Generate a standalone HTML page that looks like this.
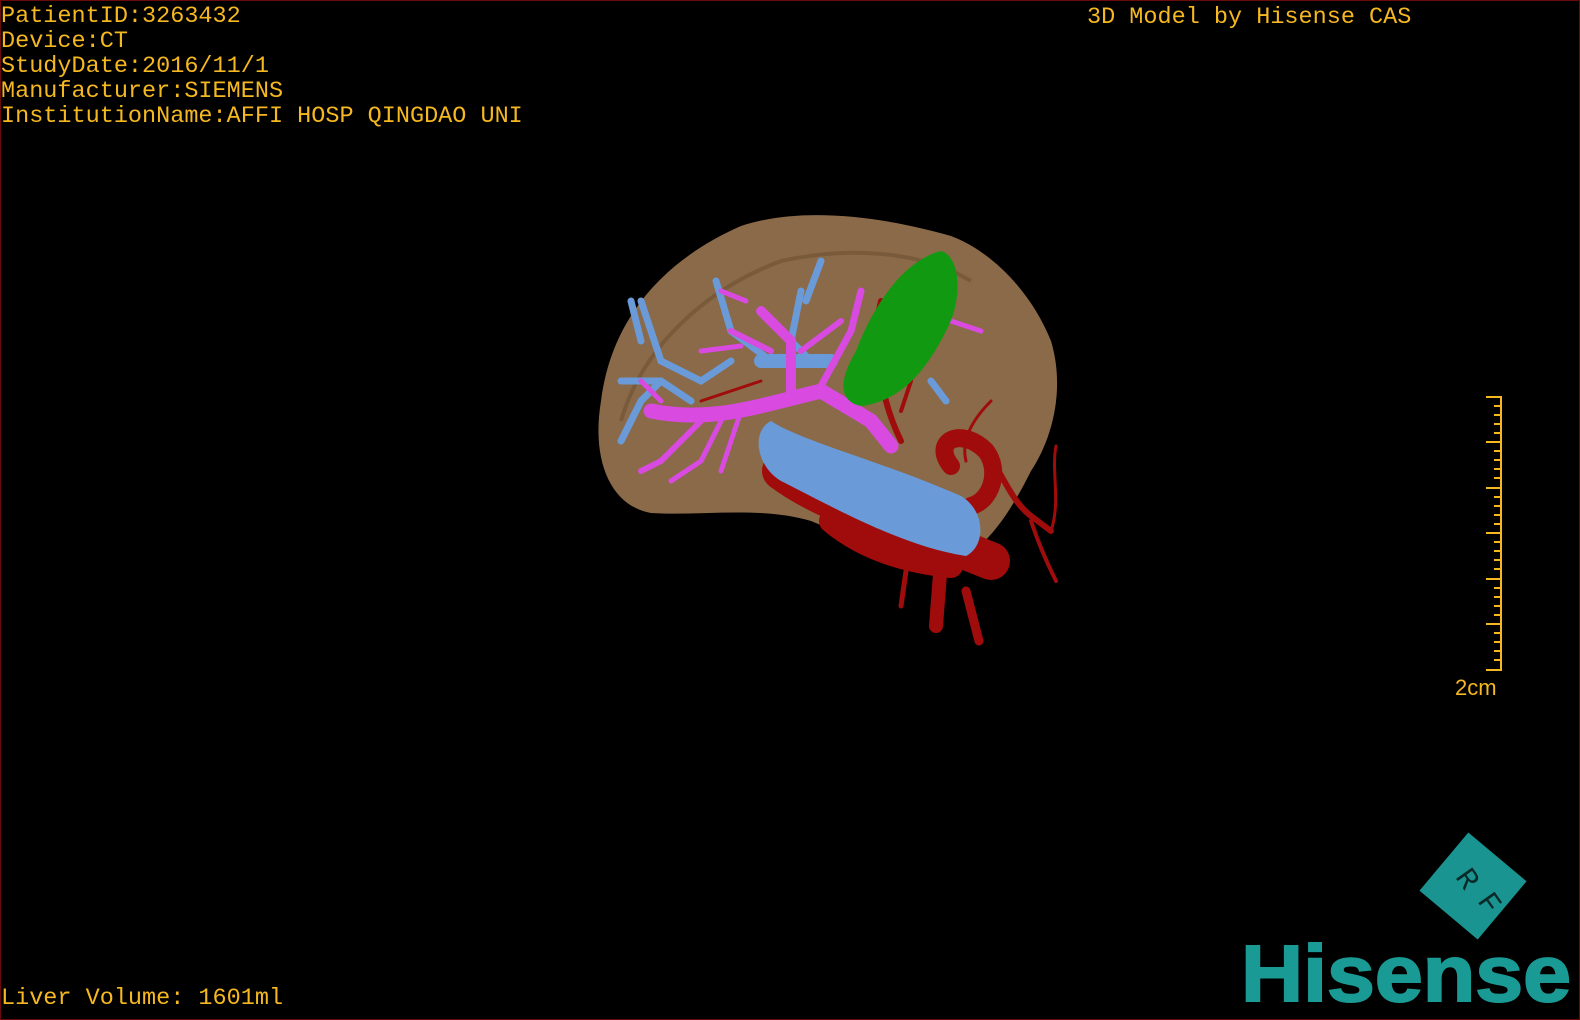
<!DOCTYPE html>
<html><head><meta charset="utf-8"><style>
html,body{margin:0;padding:0;background:#000;}
#c{position:relative;width:1580px;height:1020px;background:#000;overflow:hidden;box-sizing:border-box;border:1px solid #6a0a0a;}
.t{position:absolute;color:#f5b820;font-family:"Liberation Mono",monospace;font-size:23.5px;line-height:25px;white-space:pre;}
</style></head><body><div id="c">
<div class="t" style="left:0;top:3px">PatientID:3263432
Device:CT
StudyDate:2016/11/1
Manufacturer:SIEMENS
InstitutionName:AFFI HOSP QINGDAO UNI</div>
<div class="t" style="left:1086px;top:4px">3D Model by Hisense CAS</div>
<div class="t" style="left:0;top:985px">Liver Volume: 1601ml</div>
<svg width="1580" height="1020" style="position:absolute;left:0;top:0">
<path d="M600,400 C610,320 660,260 740,225 C800,205 880,215 950,235 C990,250 1030,290 1050,340 C1065,390 1050,440 1030,470 C1010,510 990,540 960,560 C900,565 860,540 810,520 C760,505 700,515 650,512 C610,505 590,460 600,400 Z" fill="#8a6a48"/>
<path d="M620,420 C640,350 700,290 780,260 C850,245 920,250 970,280" stroke="#6e5236" stroke-width="4" fill="none" opacity=".6"/>
<g fill="none" stroke="#a00c0c" stroke-linecap="round">
<path d="M780,470 C820,500 880,520 940,540 L990,560" stroke-width="38"/>
<path d="M830,520 C860,545 900,560 950,565" stroke-width="24"/>
<path d="M940,560 L935,625" stroke-width="14"/>
<path d="M965,590 L978,640" stroke-width="9"/>
<path d="M905,570 L900,605" stroke-width="5"/>
<path d="M950,465 C930,440 960,425 985,450 C1000,470 990,500 970,505" stroke-width="18"/>
<path d="M985,450 C1000,470 1010,500 1030,515 L1050,530" stroke-width="6"/>
<path d="M1030,520 C1040,550 1050,570 1055,580" stroke-width="4"/>
<path d="M1050,530 C1060,500 1050,470 1055,445" stroke-width="3"/>
<path d="M880,300 C870,340 880,400 900,440" stroke-width="6"/>
<path d="M900,410 L910,380" stroke-width="4"/>
<path d="M990,400 C970,420 960,440 965,460" stroke-width="3"/>
<path d="M700,400 L760,380" stroke-width="3"/>
</g>
<path d="M770,420 C800,440 880,460 960,495 C985,510 985,545 965,555 C900,545 830,505 780,480 C755,465 750,430 770,420 Z" fill="#6a9ad8"/>
<g fill="none" stroke="#6a9ad8" stroke-linecap="round" stroke-width="7">
<path d="M640,300 L660,360 L700,380 L730,360"/><path d="M620,380 L660,380 L690,400"/><path d="M640,340 L630,300"/>
<path d="M620,440 L640,400 L660,380"/><path d="M715,280 L730,330 L770,360"/><path d="M800,290 L790,340 L810,360"/>
<path d="M820,260 L805,300"/><path d="M760,360 L830,360" stroke-width="14"/><path d="M930,380 L945,400"/>
</g>
<g fill="none" stroke="#d84ae0" stroke-linecap="round">
<path d="M650,410 C700,420 740,410 780,400 L820,390 L870,420 L890,445" stroke-width="15"/>
<path d="M790,390 L790,340 L760,310" stroke-width="10"/>
<path d="M820,385 L850,330 L860,290" stroke-width="7"/>
<path d="M800,350 L840,320" stroke-width="6"/>
<path d="M730,330 L770,350" stroke-width="6"/>
<path d="M745,300 L720,290" stroke-width="5"/>
<path d="M700,420 L660,460 L640,470" stroke-width="6"/>
<path d="M720,420 L700,460 L670,480" stroke-width="5"/>
<path d="M740,410 L720,470" stroke-width="5"/>
<path d="M660,400 L640,380" stroke-width="5"/>
<path d="M700,350 L740,345" stroke-width="5"/>
<path d="M950,320 L980,330" stroke-width="5"/>
<path d="M870,330 L890,300" stroke-width="5"/>
</g>
<path d="M940,250 C960,255 962,300 945,330 C925,370 900,400 860,405 C835,400 840,375 855,350 C870,310 900,260 940,250 Z" fill="#119a11"/>
<line x1="1500" y1="395" x2="1500" y2="670" stroke="#f5b820" stroke-width="2"/>
<text x="1454" y="694" fill="#f5b820" font-family="Liberation Sans, sans-serif" font-size="22">2cm</text>
<g transform="translate(1472,885) rotate(40)">
<rect x="-38" y="-38" width="76" height="76" fill="#1a9490"/>
</g>
<text x="1462" y="880" fill="#0a2a2a" font-family="Liberation Mono, monospace" font-size="30" transform="rotate(55 1462 870)">R</text>
<text x="1484" y="904" fill="#0a2a2a" font-family="Liberation Mono, monospace" font-size="30" transform="rotate(55 1484 894)">F</text>
<text x="1240" y="1000" fill="#1a9a95" font-family="Liberation Sans, sans-serif" font-weight="bold" font-size="80" textLength="330" lengthAdjust="spacingAndGlyphs" stroke="#1a9a95" stroke-width="2">Hisense</text>
</svg>
<svg width="1580" height="1020" style="position:absolute;left:0;top:0">
<g stroke="#f5b820" stroke-width="2">
<line x1="1485" y1="396" x2="1500" y2="396"/><line x1="1493" y1="405" x2="1500" y2="405"/><line x1="1493" y1="414" x2="1500" y2="414"/><line x1="1493" y1="423" x2="1500" y2="423"/><line x1="1493" y1="432" x2="1500" y2="432"/>
<line x1="1485" y1="441" x2="1500" y2="441"/><line x1="1493" y1="450" x2="1500" y2="450"/><line x1="1493" y1="459" x2="1500" y2="459"/><line x1="1493" y1="468" x2="1500" y2="468"/><line x1="1493" y1="477" x2="1500" y2="477"/>
<line x1="1485" y1="487" x2="1500" y2="487"/><line x1="1493" y1="496" x2="1500" y2="496"/><line x1="1493" y1="505" x2="1500" y2="505"/><line x1="1493" y1="514" x2="1500" y2="514"/><line x1="1493" y1="523" x2="1500" y2="523"/>
<line x1="1485" y1="532" x2="1500" y2="532"/><line x1="1493" y1="541" x2="1500" y2="541"/><line x1="1493" y1="550" x2="1500" y2="550"/><line x1="1493" y1="559" x2="1500" y2="559"/><line x1="1493" y1="568" x2="1500" y2="568"/>
<line x1="1485" y1="578" x2="1500" y2="578"/><line x1="1493" y1="587" x2="1500" y2="587"/><line x1="1493" y1="596" x2="1500" y2="596"/><line x1="1493" y1="605" x2="1500" y2="605"/><line x1="1493" y1="614" x2="1500" y2="614"/>
<line x1="1485" y1="623" x2="1500" y2="623"/><line x1="1493" y1="632" x2="1500" y2="632"/><line x1="1493" y1="641" x2="1500" y2="641"/><line x1="1493" y1="650" x2="1500" y2="650"/><line x1="1493" y1="659" x2="1500" y2="659"/>
<line x1="1485" y1="669" x2="1500" y2="669"/>
</g></svg>
</div></body></html>
